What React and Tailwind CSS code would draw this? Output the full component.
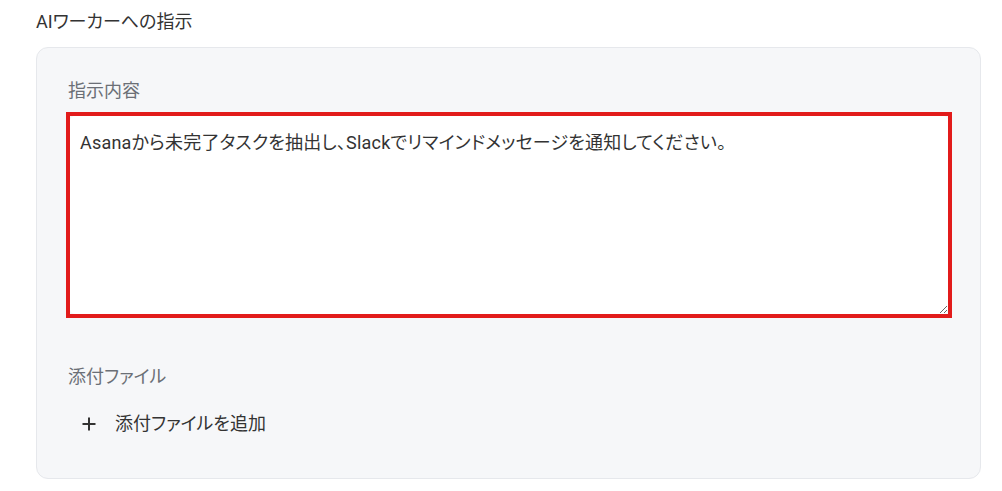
import React from "react";

export default function App() {
  const font = {
    fontFamily: 'Roboto, "Noto Sans CJK JP", sans-serif',
    fontFeatureSettings: '"palt"',
  };
  return (
    <div className="bg-white w-[1002px] h-[491px] overflow-hidden" style={font}>
      <div className="pl-[36px] pr-[21px] pt-[10px]">
        <h2 className="text-[18px] leading-6 text-[#333333] font-normal">AIワーカーへの指示</h2>
        <div className="mt-[13px] rounded-[12px] border border-[#e6e8ec] bg-[#f6f7f9] px-[31px] pt-[31px] pb-[42px]">
          <div className="text-[18px] leading-6 text-[#6b6f76]">指示内容</div>
          <div className="mt-[9px] -ml-[2px] -mr-[3px] border-[4px] border-[#e21b1b] bg-[#f6f7f9]">
            <textarea
              readOnly
              defaultValue="Asanaから未完了タスクを抽出し、Slackでリマインドメッセージを通知してください。"
              className="block w-full h-[198px] rounded-[5px] bg-white px-[10px] pt-[15px] text-[18px] leading-6 text-[#333333] outline-none resize-y tracking-[0.2px]"
              style={font}
            />
          </div>
          <div className="mt-[47px] text-[18px] leading-6 text-[#6b6f76]">添付ファイル</div>
          <button className="mt-[23px] flex items-center gap-[19px] pl-[14px] text-[18px] leading-6 text-[#333333]" style={font}>
            <svg width="14" height="14" viewBox="0 0 14 14" fill="none" stroke="#333333" strokeWidth="2">
              <path d="M7 0.5v13M0.5 7h13" />
            </svg>
            <span>添付ファイルを追加</span>
          </button>
        </div>
      </div>
    </div>
  );
}
